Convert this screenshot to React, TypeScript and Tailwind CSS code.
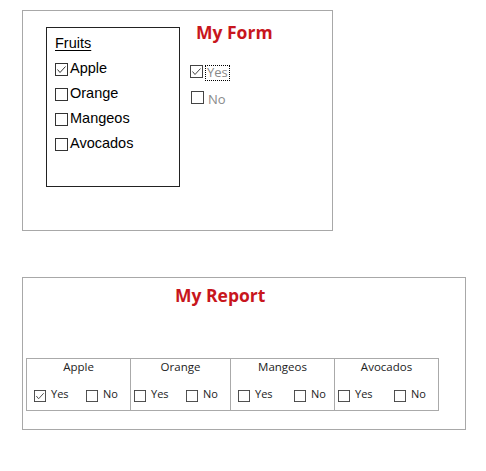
import React from "react";

type Col = { name: string; checked: boolean; pad: string; yesW: string; cell: string };

const COLS: Col[] = [
  { name: "Apple", checked: true, pad: "pl-[7px]", yesW: "w-[52px]", cell: "w-[104px] border-r" },
  { name: "Orange", checked: false, pad: "pl-[3px]", yesW: "w-[52px]", cell: "w-[100px] border-r" },
  { name: "Mangeos", checked: false, pad: "pl-[7px]", yesW: "w-[56px]", cell: "w-[104px] border-r" },
  { name: "Avocados", checked: false, pad: "pl-[3px]", yesW: "w-[56px]", cell: "w-[103px]" },
];

const FRUITS = [
  { name: "Apple", checked: true },
  { name: "Orange", checked: false },
  { name: "Mangeos", checked: false },
  { name: "Avocados", checked: false },
];

function Box({ checked, size = 13, color = "#333" }: { checked: boolean; size?: number; color?: string }) {
  return (
    <svg width={size} height={size} viewBox="0 0 13 13" className="shrink-0">
      <rect x="0.5" y="0.5" width="12" height="12" fill="white" stroke={color} strokeWidth="1" />
      {checked ? (
        <polyline points="2.5,6.5 5,9.5 10.5,3.5" fill="none" stroke={color} strokeWidth="1" />
      ) : null}
    </svg>
  );
}

export default function App() {
  return (
    <div className="min-h-[471px] w-[486px] bg-white pt-[10px] pl-[22px] font-['Open_Sans',sans-serif]">
      {/* form */}
      <div className="flex h-[221px] w-[311px] border border-[#a8a8a8] pt-[9px] pl-[23px]">
        <div className="mt-[7px] h-[160px] w-[134px] border border-[#222] pt-[7px] pl-[8px] font-['Liberation_Sans',Arial,sans-serif] text-[14.5px] text-black">
          <div className="leading-[17px] underline underline-offset-[2px]">Fruits</div>
          <div className="mt-[5px]">
            {FRUITS.map((f) => (
              <div key={f.name} className="flex h-[25px] items-center gap-[2px]">
                <Box checked={f.checked} />
                <span className="-mt-[3px] leading-[17px]">{f.name}</span>
              </div>
            ))}
          </div>
        </div>
        <div className="ml-[10px]">
          <div className="pl-[6px] text-[17.5px] leading-[24px] font-bold text-[#c8161d]">My Form</div>
          <div className="mt-[14px] text-[13px] text-[#8a8a8a]">
            <div className="flex h-[26px] items-center gap-[2px]">
              <Box checked color="#444" />
              <span className="mt-[3px] h-[16px] border border-dotted border-black px-[1px] leading-[13px]">Yes</span>
            </div>
            <div className="flex h-[26px] items-center gap-[4px] pl-[1px]">
              <Box checked={false} color="#444" />
              <span className="mt-[3px] leading-[16px]">No</span>
            </div>
          </div>
        </div>
      </div>

      {/* report */}
      <div className="mt-[46px] h-[153px] w-[444px] border border-[#a8a8a8] pt-[5px]">
        <div className="pl-[152px] text-[17.5px] leading-[24px] font-bold text-[#c8161d]">My Report</div>
        <div className="mt-[51px] ml-[3px] flex h-[53px] w-[413px] border border-[#aaaaaa] text-[#222]">
          {COLS.map((c) => (
            <div key={c.name} className={`${c.cell} border-[#aaaaaa]`}>
              <div className="text-center text-[11.5px] leading-[16px]">{c.name}</div>
              <div className={`mt-[12px] flex text-[11px] leading-[14px] ${c.pad}`}>
                <div className={`flex items-start gap-[5px] ${c.yesW}`}>
                  <div className="mt-[3px]">
                    <Box checked={c.checked} size={12} color="#444" />
                  </div>
                  <span>Yes</span>
                </div>
                <div className="flex items-start gap-[5px]">
                  <div className="mt-[3px]">
                    <Box checked={false} size={12} color="#444" />
                  </div>
                  <span>No</span>
                </div>
              </div>
            </div>
          ))}
        </div>
      </div>
    </div>
  );
}
